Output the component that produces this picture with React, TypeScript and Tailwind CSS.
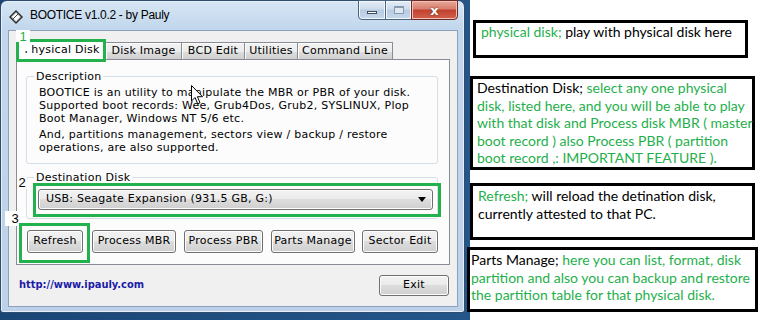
import React from "react";

const UI = "font-['DejaVu_Sans',sans-serif] tracking-[0.25px]";
const BTN =
  "flex items-center justify-center rounded-[3px] border border-[#707070] bg-[linear-gradient(#f2f2f2,#ebebeb_50%,#dddddd_50%,#cfcfcf)] shadow-[inset_0_0_0_1px_#fcfcfc] text-[11px] text-black";

function DriveIcon() {
  return (
    <svg width="16" height="16" viewBox="0 0 16 16">
      <polygon points="8,1 15,8 8,15 1,8" fill="#2b2b2b" />
      <polygon points="8,3 13,8 8,13 3,8" fill="#d8d8d8" />
      <polygon points="8,4.5 11.5,8 8,11.5 4.5,8" fill="#ffffff" />
      <line x1="5" y1="10" x2="10" y2="5" stroke="#444" strokeWidth="1" />
    </svg>
  );
}

function Cursor() {
  return (
    <svg width="13" height="20" viewBox="0 0 13 20">
      <path
        d="M0.5 0.5 L0.5 16 L4 12.5 L6.7 18.8 L9 17.8 L6.4 11.7 L11.5 11.7 Z"
        fill="#fff"
        stroke="#000"
        strokeWidth="1"
        strokeLinejoin="round"
      />
    </svg>
  );
}

function Tab({ label, w }: { label: string; w: number }) {
  return (
    <div
      style={{ width: w }}
      className="h-[18px] flex items-center justify-center border border-b-0 border-[#898c95] bg-[linear-gradient(#f3f3f3,#ebebeb_50%,#dedede_50%,#cdcdcd)] shadow-[inset_1px_1px_0_#fcfcfc] text-[11px] text-black -ml-[1px]"
    >
      {label}
    </div>
  );
}

function Window() {
  return (
    <div className="w-[465px] h-[313px] rounded-t-[7px] rounded-b-[3px] border border-[#2f4d6e] bg-[linear-gradient(#d6e5f4,#c2d7ed_28px,#bdd2e9)] shadow-[inset_0_0_0_1px_#e6eff9]">
      {/* title bar */}
      <div className="h-[29px] flex items-start">
        <div className="ml-[7px] mt-[8px]">
          <DriveIcon />
        </div>
        <div className="ml-[6px] mt-[7px] text-[12px] tracking-[-0.3px] leading-[15px] text-black font-['Liberation_Sans',sans-serif]">
          BOOTICE v1.0.2 - by Pauly
        </div>
        <div className="ml-auto mr-[6px] -mt-[1px] flex h-[20px]">
          <div className="w-[28px] h-[20px] rounded-bl-[4px] border border-[#4a6582] bg-[linear-gradient(#e4edf7,#cfdcec_45%,#b8cbe2_50%,#c8d9ec)] shadow-[inset_0_0_0_1px_#f4f8fc] flex items-center justify-center">
            <div className="w-[10px] h-[3px] mt-[5px] bg-white border border-[#3b4d63]" />
          </div>
          <div className="w-[27px] h-[20px] -ml-[1px] border border-[#4a6582] bg-[linear-gradient(#e4edf7,#cfdcec_45%,#b8cbe2_50%,#c8d9ec)] shadow-[inset_0_0_0_1px_#f4f8fc] flex items-center justify-center">
            <div className="w-[10px] h-[8px] border border-[#8a9bb0] border-t-[2px] bg-[#dfe7f1]" />
          </div>
          <div className="w-[47px] h-[20px] -ml-[1px] rounded-br-[4px] border border-[#6e2a24] bg-[linear-gradient(#e9a99a,#d77c6c_45%,#c2412f_50%,#d0614c)] shadow-[inset_0_0_0_1px_#f1c1b6] flex items-center justify-center">
            <span className="text-white text-[13px] font-bold font-['DejaVu_Sans',sans-serif] leading-none [text-shadow:0_0_2px_#5a1a12]">
              x
            </span>
          </div>
        </div>
      </div>
      {/* client */}
      <div
        className={`ml-[7px] w-[450px] h-[277px] border border-[#8aa2bb] bg-[#f0f0f0] flex flex-col px-[7px] pt-[9px] ${UI}`}
      >
        {/* tab strip */}
        <div className="flex items-end h-[20px] pl-[1px]">
          <div className="relative z-10 w-[89px] h-[20px] flex items-center justify-center border border-b-0 border-[#898c95] bg-white text-[11px] text-black pl-[1px]">
            Physical Disk
          </div>
          <Tab label="Disk Image" w={77} />
          <Tab label="BCD Edit" w={64} />
          <Tab label="Utilities" w={54} />
          <Tab label="Command Line" w={96} />
        </div>
        {/* panel */}
        <div className="-mt-[1px] w-[434px] h-[206px] border border-[#898c95] bg-[#fcfcfc] flex flex-col pl-[9px]">
          <div className="relative mt-[16px] w-[412px] h-[88px] rounded-[3px] border border-[#d5dfe5] pl-[12px] pt-[9px] text-[11px] leading-[13px] text-black">
            <div className="absolute -top-[7px] left-[7px] px-[2px] bg-[#fcfcfc] leading-[13px]">
              Description
            </div>
            <p>
              BOOTICE is an utility to manipulate the MBR or PBR of your disk.
              <br />
              Supported boot records: Wee, Grub4Dos, Grub2, SYSLINUX, Plop
              <br />
              Boot Manager, Windows NT 5/6 etc.
            </p>
            <p className="mt-[3px]">
              And, partitions management, sectors view / backup / restore
              <br />
              operations, are also supported.
            </p>
          </div>
          <div className="relative mt-[13px] w-[412px] h-[42px] rounded-[3px] border border-[#d5dfe5] pl-[11px] pt-[11px] text-[11px] text-black">
            <div className="absolute -top-[7px] left-[7px] px-[2px] bg-[#fcfcfc] leading-[13px]">
              Destination Disk
            </div>
            <div className="w-[395px] h-[21px] rounded-[3px] border border-[#707070] bg-[linear-gradient(#f2f2f2,#ebebeb_50%,#dddddd_50%,#cfcfcf)] shadow-[inset_0_0_0_1px_#fcfcfc] flex items-center pl-[7px] pr-[6px]">
              <span>USB: Seagate Expansion (931.5 GB, G:)</span>
              <svg className="ml-auto" width="8" height="5" viewBox="0 0 8 5">
                <polygon points="0,0 8,0 4,5" fill="#000" />
              </svg>
            </div>
          </div>
          <div className="mt-[11px] flex h-[23px] pl-[1px]">
            <div className={`${BTN} w-[56px]`}>Refresh</div>
            <div className={`${BTN} w-[84px] ml-[9px]`}>Process MBR</div>
            <div className={`${BTN} w-[79px] ml-[8px]`}>Process PBR</div>
            <div className={`${BTN} w-[84px] ml-[8px]`}>Parts Manage</div>
            <div className={`${BTN} w-[76px] ml-[7px]`}>Sector Edit</div>
          </div>
        </div>
        {/* bottom row */}
        <div className="mt-[10px] flex items-center h-[21px]">
          <span className="ml-[3px] text-[11px] font-bold tracking-normal text-[#1c1ca8] font-['DejaVu_Sans_Condensed','DejaVu_Sans',sans-serif]">
            http://www.ipauly.com
          </span>
          <div className={`${BTN} ml-auto mr-[1px] w-[70px] h-[21px]`}>Exit</div>
        </div>
      </div>
    </div>
  );
}

function G({ children }: { children: React.ReactNode }) {
  return <span className="text-[#1fb04c]">{children}</span>;
}

export default function App() {
  return (
    <div className="relative flex w-[758px] h-[320px] overflow-hidden bg-white">
      <div className="w-[470px] h-[320px] shrink-0 bg-[linear-gradient(90deg,#1a4676,#24568a)]">
        <Window />
      </div>
      <div className="flex flex-col font-['Lato',sans-serif] text-[14px] leading-[17.5px] text-black whitespace-nowrap">
        <div className="mt-[20px] ml-[3px] w-[275px] h-[38px] border-[3px] border-black pl-[5px] pt-0">
          <G>physical disk;</G> play with physical disk here
        </div>
        <div className="mt-[18px] w-[285px] h-[94px] border-[3px] border-black pl-[4px]">
          Destination Disk; <G>select any one physical</G>
          <br />
          <G>disk, listed here, and you will be able to play</G>
          <br />
          <G>with that disk and Process disk MBR ( master</G>
          <br />
          <G>boot record ) also Process PBR ( partition</G>
          <br />
          <G>boot record ,: IMPORTANT FEATURE ).</G>
        </div>
        <div className="mt-[13px] w-[285px] h-[57px] border-[3px] border-black pl-[5px] pt-[1px]">
          <G>Refresh;</G> will reload the detination disk,
          <br />
          currently attested to that PC.
        </div>
        <div className="mt-[7px] -ml-[3px] w-[291px] h-[65px] border-[3px] border-black pl-[1px] pt-[1px]">
          Parts Manage; <G>here you can list, format, disk</G>
          <br />
          <G>partition and also you can backup and restore</G>
          <br />
          <G>the partition table for that physical disk.</G>
        </div>
      </div>

      {/* annotation overlays on the window */}
      <div className="absolute z-20 left-[16px] top-[39px] w-[90px] h-[23px] border-[3px] border-[#22b14c]" />
      <div className="absolute z-20 left-[19px] top-[42px] w-[13px] h-[9px] bg-white" />
      <div className="absolute z-20 left-[16px] top-[30px] w-[14px] h-[12px] bg-white flex items-center justify-center font-['Liberation_Sans',sans-serif] text-[13px] leading-none text-[#22b14c]">
        1
      </div>
      <div className="absolute z-20 left-[17px] top-[175px] w-[10px] h-[14px] bg-[#fcfcfc] flex items-center justify-center font-['Liberation_Sans',sans-serif] text-[13px] leading-none text-black">
        2
      </div>
      <div className="absolute z-20 left-[33px] top-[183px] w-[408px] h-[34px] border-[3px] border-[#22b14c]" />
      <div className="absolute z-20 left-[5px] top-[211px] w-[20px] h-[15px] bg-white flex items-center justify-center font-['Liberation_Sans',sans-serif] text-[13px] leading-none text-black">
        3
      </div>
      <div className="absolute z-20 left-[19px] top-[223px] w-[71px] h-[40px] border-[3px] border-[#22b14c]" />
      <div className="absolute z-20 left-[191px] top-[85px]">
        <Cursor />
      </div>
    </div>
  );
}
